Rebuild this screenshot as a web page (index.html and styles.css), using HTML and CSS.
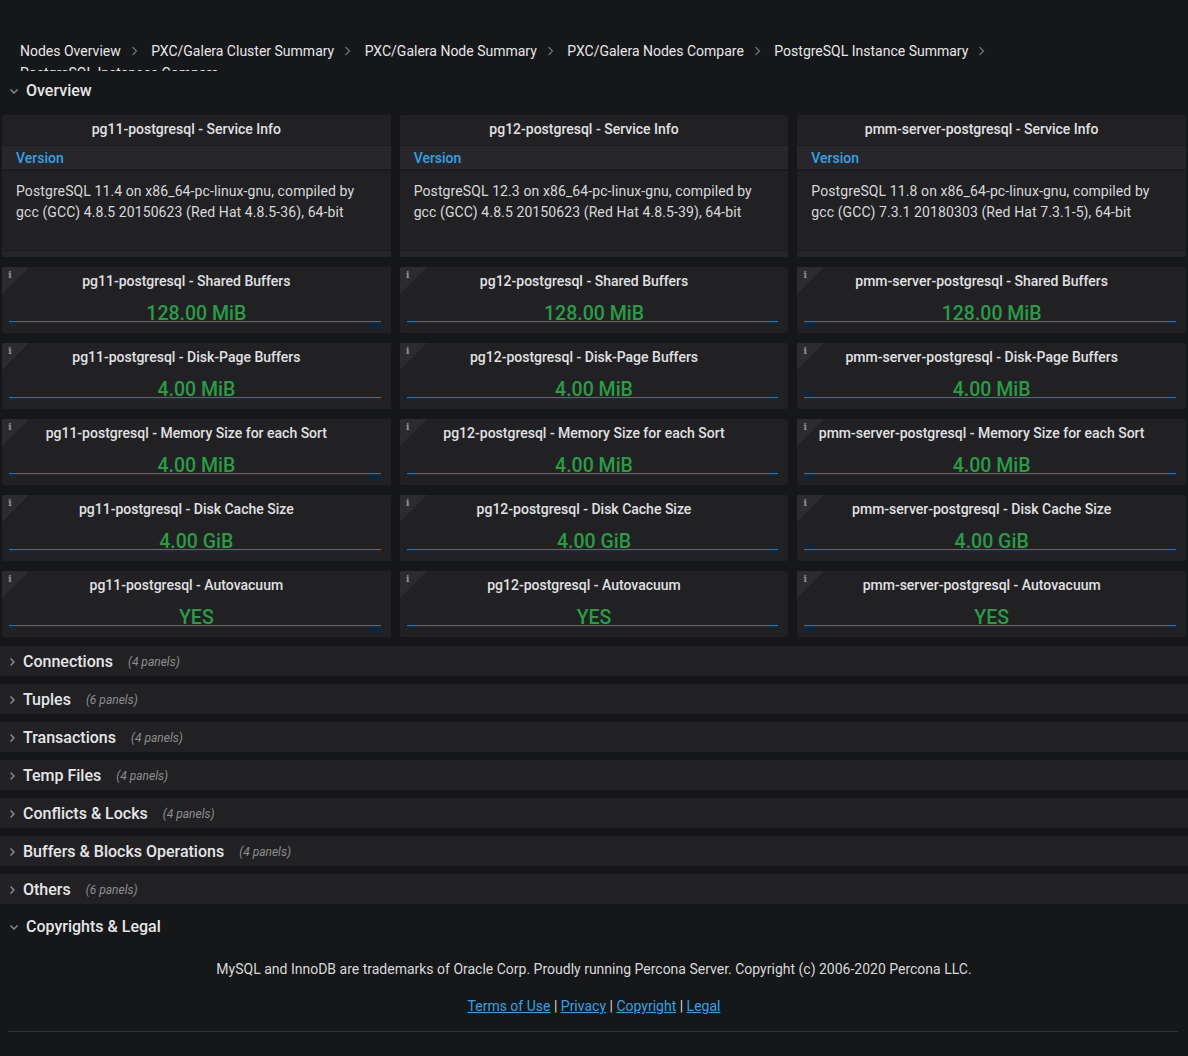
FILE: index.html
```html
<!DOCTYPE html>
<html>
<head>
<meta charset="utf-8">
<link rel="stylesheet" href="styles.css">
</head>
<body>
<nav class="crumbs">
  <span class="crumb">Nodes Overview</span><span class="sep"><svg width="7" height="10" viewBox="0 0 7 10"><path d="M1.5 1 L5.5 5 L1.5 9" fill="none" stroke="#6e6f73" stroke-width="1.3"/></svg></span>
  <span class="crumb">PXC/Galera Cluster Summary</span><span class="sep"><svg width="7" height="10" viewBox="0 0 7 10"><path d="M1.5 1 L5.5 5 L1.5 9" fill="none" stroke="#6e6f73" stroke-width="1.3"/></svg></span>
  <span class="crumb">PXC/Galera Node Summary</span><span class="sep"><svg width="7" height="10" viewBox="0 0 7 10"><path d="M1.5 1 L5.5 5 L1.5 9" fill="none" stroke="#6e6f73" stroke-width="1.3"/></svg></span>
  <span class="crumb">PXC/Galera Nodes Compare</span><span class="sep"><svg width="7" height="10" viewBox="0 0 7 10"><path d="M1.5 1 L5.5 5 L1.5 9" fill="none" stroke="#6e6f73" stroke-width="1.3"/></svg></span>
  <span class="crumb">PostgreSQL Instance Summary</span><span class="sep"><svg width="7" height="10" viewBox="0 0 7 10"><path d="M1.5 1 L5.5 5 L1.5 9" fill="none" stroke="#6e6f73" stroke-width="1.3"/></svg></span>
  <span class="crumb">PostgreSQL Instances Compare</span>
</nav>

<div class="row-open">
  <svg class="chev-down" width="10" height="7" viewBox="0 0 10 7"><path d="M1.5 1.5 L5 5 L8.5 1.5" fill="none" stroke="#8e8e8e" stroke-width="1.4"/></svg>
  <span class="row-title">Overview</span>
</div>

<div class="grid">
  <div class="panel info">
    <div class="ptitle">pg11-postgresql - Service Info</div>
    <div class="thead">Version</div>
    <div class="tcell">PostgreSQL 11.4 on x86_64-pc-linux-gnu, compiled by gcc (GCC) 4.8.5 20150623 (Red Hat 4.8.5-36), 64-bit</div>
    <div class="tfoot"></div>
  </div>
  <div class="panel info">
    <div class="ptitle">pg12-postgresql - Service Info</div>
    <div class="thead">Version</div>
    <div class="tcell">PostgreSQL 12.3 on x86_64-pc-linux-gnu, compiled by gcc (GCC) 4.8.5 20150623 (Red Hat 4.8.5-39), 64-bit</div>
    <div class="tfoot"></div>
  </div>
  <div class="panel info">
    <div class="ptitle">pmm-server-postgresql - Service Info</div>
    <div class="thead">Version</div>
    <div class="tcell">PostgreSQL 11.8 on x86_64-pc-linux-gnu, compiled by gcc (GCC) 7.3.1 20180303 (Red Hat 7.3.1-5), 64-bit</div>
    <div class="tfoot"></div>
  </div>

  <div class="panel stat"><span class="corner"><span class="ci">i</span></span><div class="stitle">pg11-postgresql - Shared Buffers</div><div class="svalue">128.00 MiB</div><div class="spark"></div></div>
  <div class="panel stat"><span class="corner"><span class="ci">i</span></span><div class="stitle">pg12-postgresql - Shared Buffers</div><div class="svalue">128.00 MiB</div><div class="spark"></div></div>
  <div class="panel stat"><span class="corner"><span class="ci">i</span></span><div class="stitle">pmm-server-postgresql - Shared Buffers</div><div class="svalue">128.00 MiB</div><div class="spark"></div></div>

  <div class="panel stat"><span class="corner"><span class="ci">i</span></span><div class="stitle">pg11-postgresql - Disk-Page Buffers</div><div class="svalue">4.00 MiB</div><div class="spark"></div></div>
  <div class="panel stat"><span class="corner"><span class="ci">i</span></span><div class="stitle">pg12-postgresql - Disk-Page Buffers</div><div class="svalue">4.00 MiB</div><div class="spark"></div></div>
  <div class="panel stat"><span class="corner"><span class="ci">i</span></span><div class="stitle">pmm-server-postgresql - Disk-Page Buffers</div><div class="svalue">4.00 MiB</div><div class="spark"></div></div>

  <div class="panel stat"><span class="corner"><span class="ci">i</span></span><div class="stitle">pg11-postgresql - Memory Size for each Sort</div><div class="svalue">4.00 MiB</div><div class="spark"></div></div>
  <div class="panel stat"><span class="corner"><span class="ci">i</span></span><div class="stitle">pg12-postgresql - Memory Size for each Sort</div><div class="svalue">4.00 MiB</div><div class="spark"></div></div>
  <div class="panel stat"><span class="corner"><span class="ci">i</span></span><div class="stitle">pmm-server-postgresql - Memory Size for each Sort</div><div class="svalue">4.00 MiB</div><div class="spark"></div></div>

  <div class="panel stat"><span class="corner"><span class="ci">i</span></span><div class="stitle">pg11-postgresql - Disk Cache Size</div><div class="svalue">4.00 GiB</div><div class="spark"></div></div>
  <div class="panel stat"><span class="corner"><span class="ci">i</span></span><div class="stitle">pg12-postgresql - Disk Cache Size</div><div class="svalue">4.00 GiB</div><div class="spark"></div></div>
  <div class="panel stat"><span class="corner"><span class="ci">i</span></span><div class="stitle">pmm-server-postgresql - Disk Cache Size</div><div class="svalue">4.00 GiB</div><div class="spark"></div></div>

  <div class="panel stat"><span class="corner"><span class="ci">i</span></span><div class="stitle">pg11-postgresql - Autovacuum</div><div class="svalue">YES</div><div class="spark"></div></div>
  <div class="panel stat"><span class="corner"><span class="ci">i</span></span><div class="stitle">pg12-postgresql - Autovacuum</div><div class="svalue">YES</div><div class="spark"></div></div>
  <div class="panel stat"><span class="corner"><span class="ci">i</span></span><div class="stitle">pmm-server-postgresql - Autovacuum</div><div class="svalue">YES</div><div class="spark"></div></div>
</div>

<div class="rows">
  <div class="row-closed"><svg class="chev-right" width="7" height="10" viewBox="0 0 7 10"><path d="M1.5 1.5 L5 5 L1.5 8.5" fill="none" stroke="#8e8e8e" stroke-width="1.4"/></svg><span class="row-title">Connections</span><span class="count">(4 panels)</span></div>
  <div class="row-closed"><svg class="chev-right" width="7" height="10" viewBox="0 0 7 10"><path d="M1.5 1.5 L5 5 L1.5 8.5" fill="none" stroke="#8e8e8e" stroke-width="1.4"/></svg><span class="row-title">Tuples</span><span class="count">(6 panels)</span></div>
  <div class="row-closed"><svg class="chev-right" width="7" height="10" viewBox="0 0 7 10"><path d="M1.5 1.5 L5 5 L1.5 8.5" fill="none" stroke="#8e8e8e" stroke-width="1.4"/></svg><span class="row-title">Transactions</span><span class="count">(4 panels)</span></div>
  <div class="row-closed"><svg class="chev-right" width="7" height="10" viewBox="0 0 7 10"><path d="M1.5 1.5 L5 5 L1.5 8.5" fill="none" stroke="#8e8e8e" stroke-width="1.4"/></svg><span class="row-title">Temp Files</span><span class="count">(4 panels)</span></div>
  <div class="row-closed"><svg class="chev-right" width="7" height="10" viewBox="0 0 7 10"><path d="M1.5 1.5 L5 5 L1.5 8.5" fill="none" stroke="#8e8e8e" stroke-width="1.4"/></svg><span class="row-title">Conflicts &amp; Locks</span><span class="count">(4 panels)</span></div>
  <div class="row-closed"><svg class="chev-right" width="7" height="10" viewBox="0 0 7 10"><path d="M1.5 1.5 L5 5 L1.5 8.5" fill="none" stroke="#8e8e8e" stroke-width="1.4"/></svg><span class="row-title">Buffers &amp; Blocks Operations</span><span class="count">(4 panels)</span></div>
  <div class="row-closed"><svg class="chev-right" width="7" height="10" viewBox="0 0 7 10"><path d="M1.5 1.5 L5 5 L1.5 8.5" fill="none" stroke="#8e8e8e" stroke-width="1.4"/></svg><span class="row-title">Others</span><span class="count">(6 panels)</span></div>
</div>

<div class="row-open legal">
  <svg class="chev-down" width="10" height="7" viewBox="0 0 10 7"><path d="M1.5 1.5 L5 5 L8.5 1.5" fill="none" stroke="#8e8e8e" stroke-width="1.4"/></svg>
  <span class="row-title">Copyrights &amp; Legal</span>
</div>

<footer class="footer">
  <p class="ftext">MySQL and InnoDB are trademarks of Oracle Corp. Proudly running Percona Server. Copyright (c) 2006-2020 Percona LLC.</p>
  <p class="flinks"><a href="#">Terms of Use</a> | <a href="#">Privacy</a> | <a href="#">Copyright</a> | <a href="#">Legal</a></p>
  <div class="hr"></div>
</footer>
</body>
</html>
```
FILE: styles.css
```css
* { box-sizing: border-box; }
html, body { margin: 0; padding: 0; }
body {
  background: #161719;
  color: #d8d9da;
  font-family: Roboto, "Helvetica Neue", Arial, sans-serif;
  font-size: 14px;
  width: 1188px;
  height: 1056px;
  overflow: hidden;
}

.crumbs {
  padding: 40px 20px 0;
  height: 71px;
  overflow: hidden;
  line-height: 21px;
  font-size: 14px;
  color: #e6e6e8;
}
.crumb { white-space: nowrap; }
.sep { display: inline-block; margin: 0 10px 0 10px; }
.sep svg { display: block; margin-top: -1px; }
.crumbs .sep, .crumbs .crumb { vertical-align: middle; }

.row-open {
  display: flex;
  align-items: center;
  height: 38px;
  padding-left: 9px;
}
.chev-down { margin-right: 7px; margin-top: 3px; }
.row-open .row-title { font-size: 16px; font-weight: 500; color: #e6e6e8; }

.grid {
  display: grid;
  grid-template-columns: repeat(3, 1fr);
  gap: 10px 9px;
  padding: 6px 2px 0;
}
.panel {
  background: #212124;
  border-radius: 2px;
  position: relative;
  overflow: hidden;
}
.info { height: 142px; display: flex; flex-direction: column; }
.ptitle {
  height: 28px;
  line-height: 28px;
  text-align: center;
  font-weight: 500;
  font-size: 14px;
  color: #e0e0e2;
  padding-right: 20px;
}
.thead {
  height: 26px;
  line-height: 24px;
  margin-top: 2px;
  background: #27272b;
  border-top: 1px solid #1b1b1e;
  border-bottom: 2px solid #1b1b1e;
  padding-left: 14px;
  color: #33a2e5;
  font-weight: 500;
}
.tcell {
  flex: 1;
  padding: 10px 30px 0 14px;
  line-height: 21px;
  letter-spacing: 0.1px;
  color: #d8d9da;
}
.tfoot {
  height: 7px;
  background: #252528;
  border-top: 1px solid #1b1b1e;
}

.stat { height: 66px; }
.corner {
  position: absolute;
  left: 0; top: 0;
  width: 0; height: 0;
  border-top: 27px solid #2c2c30;
  border-right: 27px solid transparent;
}
.ci {
  position: absolute;
  left: 6px; top: -25px;
  font-family: "DejaVu Serif", serif;
  font-weight: bold;
  font-size: 10px;
  color: #8e8e8e;
}
.stitle {
  text-align: center;
  font-weight: 500;
  font-size: 14px;
  line-height: 18px;
  padding: 5px 20px 0 0;
  color: #e0e0e2;
}
.svalue {
  text-align: center;
  color: #299c46;
  font-size: 19.5px;
  font-weight: 500;
  line-height: 24px;
  margin-top: 12px;
  position: relative;
  z-index: 1;
}
.spark {
  margin: -5px 10px 0 7px;
  height: 3px;
  border-top: 1px solid #1f78c1;
  background: #0f2a44;
}

.rows {
  display: flex;
  flex-direction: column;
  gap: 8px;
  padding-top: 9px;
}
.row-closed {
  height: 30px;
  background: #212124;
  display: flex;
  align-items: center;
  padding-left: 9px;
}
.chev-right { margin-right: 7px; margin-top: 2px; }
.row-closed .row-title { font-size: 16px; font-weight: 500; color: #e6e6e8; }
.count {
  font-style: italic;
  font-size: 12px;
  color: #8e8e8e;
  margin-left: 15px;
  margin-top: 2px;
}
.row-open.legal { margin-top: 7px; height: 30px; }

.footer { padding: 0 10px; }
.ftext {
  margin: 19px 0 0;
  text-align: center;
  font-size: 14px;
  line-height: 18px;
  color: #d8d9da;
}
.flinks {
  margin: 19px 0 0;
  text-align: center;
  font-size: 14px;
  line-height: 18px;
  color: #d8d9da;
}
.flinks a { color: #33a2e5; text-decoration: underline; }
.hr {
  margin: 16px 0 0 -2px;
  height: 1px;
  background: #333336;
}
```
